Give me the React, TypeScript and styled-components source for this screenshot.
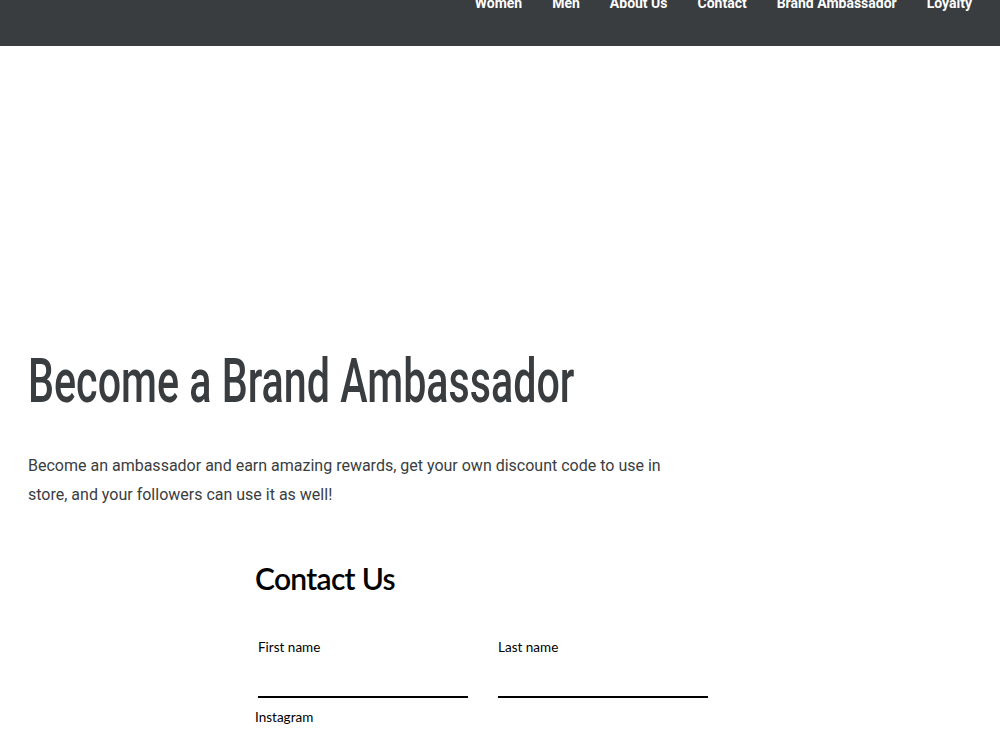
import React from 'react'
import styled, { createGlobalStyle } from 'styled-components'

const GlobalStyle = createGlobalStyle`
  html, body {
    margin: 0;
    padding: 0;
    background: #ffffff;
    font-family: Roboto, "Liberation Sans", sans-serif;
  }
`

const Header = styled.header`
  height: 46px;
  background: #3a3d40;
  overflow: hidden;
  display: flex;
  justify-content: flex-end;
  padding-right: 28px;
`

const Nav = styled.nav`
  display: flex;
  gap: 30px;
  margin-top: -7px;
`

const NavLink = styled.a`
  color: #ffffff;
  font-family: Roboto, "Liberation Sans", sans-serif;
  font-weight: 700;
  font-size: 14px;
  line-height: 20px;
  text-decoration: none;
`

const Main = styled.main`
  padding: 300px 28px 0;
`

const Title = styled.h1`
  margin: 0;
  display: inline-block;
  font-family: Roboto, sans-serif;
  font-weight: 500;
  font-size: 62px;
  line-height: 70px;
  color: #3a3d40;
  white-space: nowrap;
  transform: scaleX(0.665);
  transform-origin: left center;
`

const Intro = styled.p`
  margin: 35px 0 0;
  max-width: 650px;
  font-size: 16px;
  line-height: 29px;
  color: #3a3d40;
`

const FormBox = styled.section`
  width: 455px;
  margin: 52px 0 0 227px;
`

const FormTitle = styled.h2`
  margin: 0;
  font-family: Lato, sans-serif;
  font-weight: 600;
  font-size: 30px;
  letter-spacing: -0.7px;
  line-height: 34px;
  color: #000000;
`

const Row = styled.div`
  display: grid;
  grid-template-columns: 210px 210px;
  column-gap: 30px;
  margin-top: 43px;
  padding-left: 3px;
`

const Field = styled.label`
  display: flex;
  flex-direction: column;
`

const Label = styled.span`
  font-family: Lato, sans-serif;
  font-size: 13.5px;
  line-height: 18px;
  color: #000;
`

const Input = styled.input`
  height: 29px;
  margin-top: 11px;
  border: none;
  border-bottom: 2px solid #000;
  outline: none;
  background: transparent;
  font-size: 14px;
  padding: 0;
`

const Instagram = styled(Label)`
  display: block;
  margin-top: 10px;
`

export default function App() {
  return (
    <>
      <GlobalStyle />
      <Header>
        <Nav>
          <NavLink>Women</NavLink>
          <NavLink>Men</NavLink>
          <NavLink>About Us</NavLink>
          <NavLink>Contact</NavLink>
          <NavLink>Brand Ambassador</NavLink>
          <NavLink>Loyalty</NavLink>
        </Nav>
      </Header>
      <Main>
        <Title>Become a Brand Ambassador</Title>
        <Intro>
          Become an ambassador and earn amazing rewards, get your own discount code to use in store, and your
          followers can use it as well!
        </Intro>
        <FormBox>
          <FormTitle>Contact Us</FormTitle>
          <Row>
            <Field>
              <Label>First name</Label>
              <Input />
            </Field>
            <Field>
              <Label>Last name</Label>
              <Input />
            </Field>
          </Row>
          <Instagram>Instagram</Instagram>
        </FormBox>
      </Main>
    </>
  )
}
